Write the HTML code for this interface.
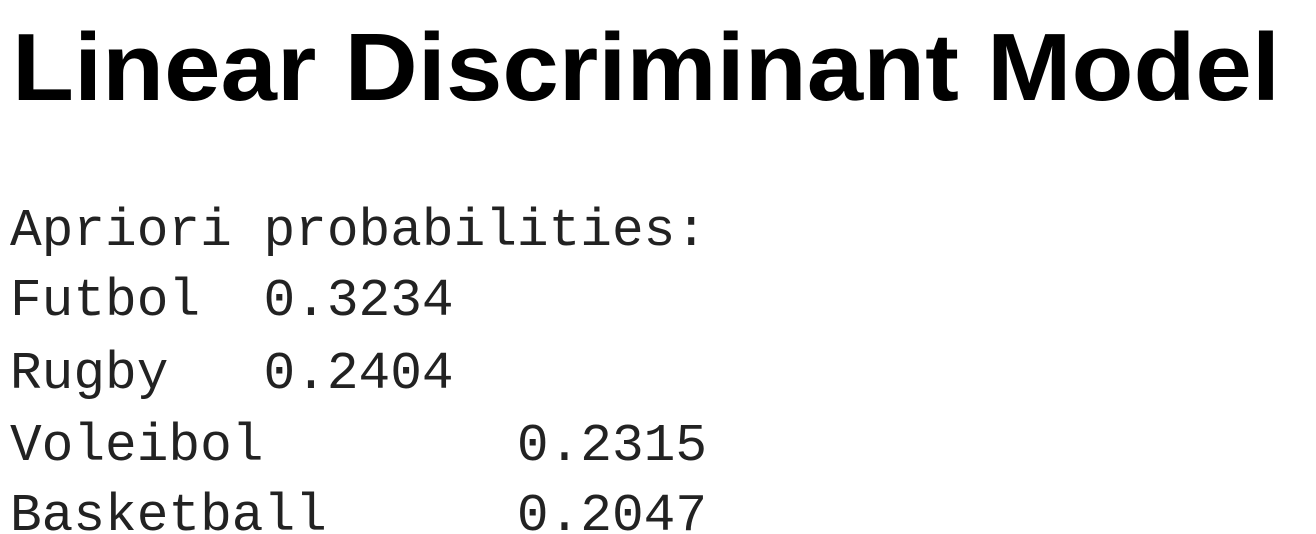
<!DOCTYPE html>
<html><head><meta charset="utf-8"><style>
html,body{margin:0;padding:0;background:#fff;width:1316px;height:534px;overflow:hidden}
.m text{white-space:pre}
</style></head><body>
<svg width="1316" height="534" xmlns="http://www.w3.org/2000/svg">
<text x="12" y="100" font-family="Liberation Sans, DejaVu Sans, sans-serif" font-weight="bold" font-size="96" textLength="1268" lengthAdjust="spacingAndGlyphs" fill="#000">Linear Discriminant Model</text>
<g class="m" font-family="Liberation Mono, Courier New, monospace" font-size="52.8" fill="#222">
<text x="10" y="245">Apriori probabilities:</text>
<text x="10" y="315">Futbol  0.3234</text>
<text x="10" y="388">Rugby   0.2404</text>
<text x="10" y="460">Voleibol        0.2315</text>
<text x="10" y="530">Basketball      0.2047</text>
</g>
</svg>
</body></html>
